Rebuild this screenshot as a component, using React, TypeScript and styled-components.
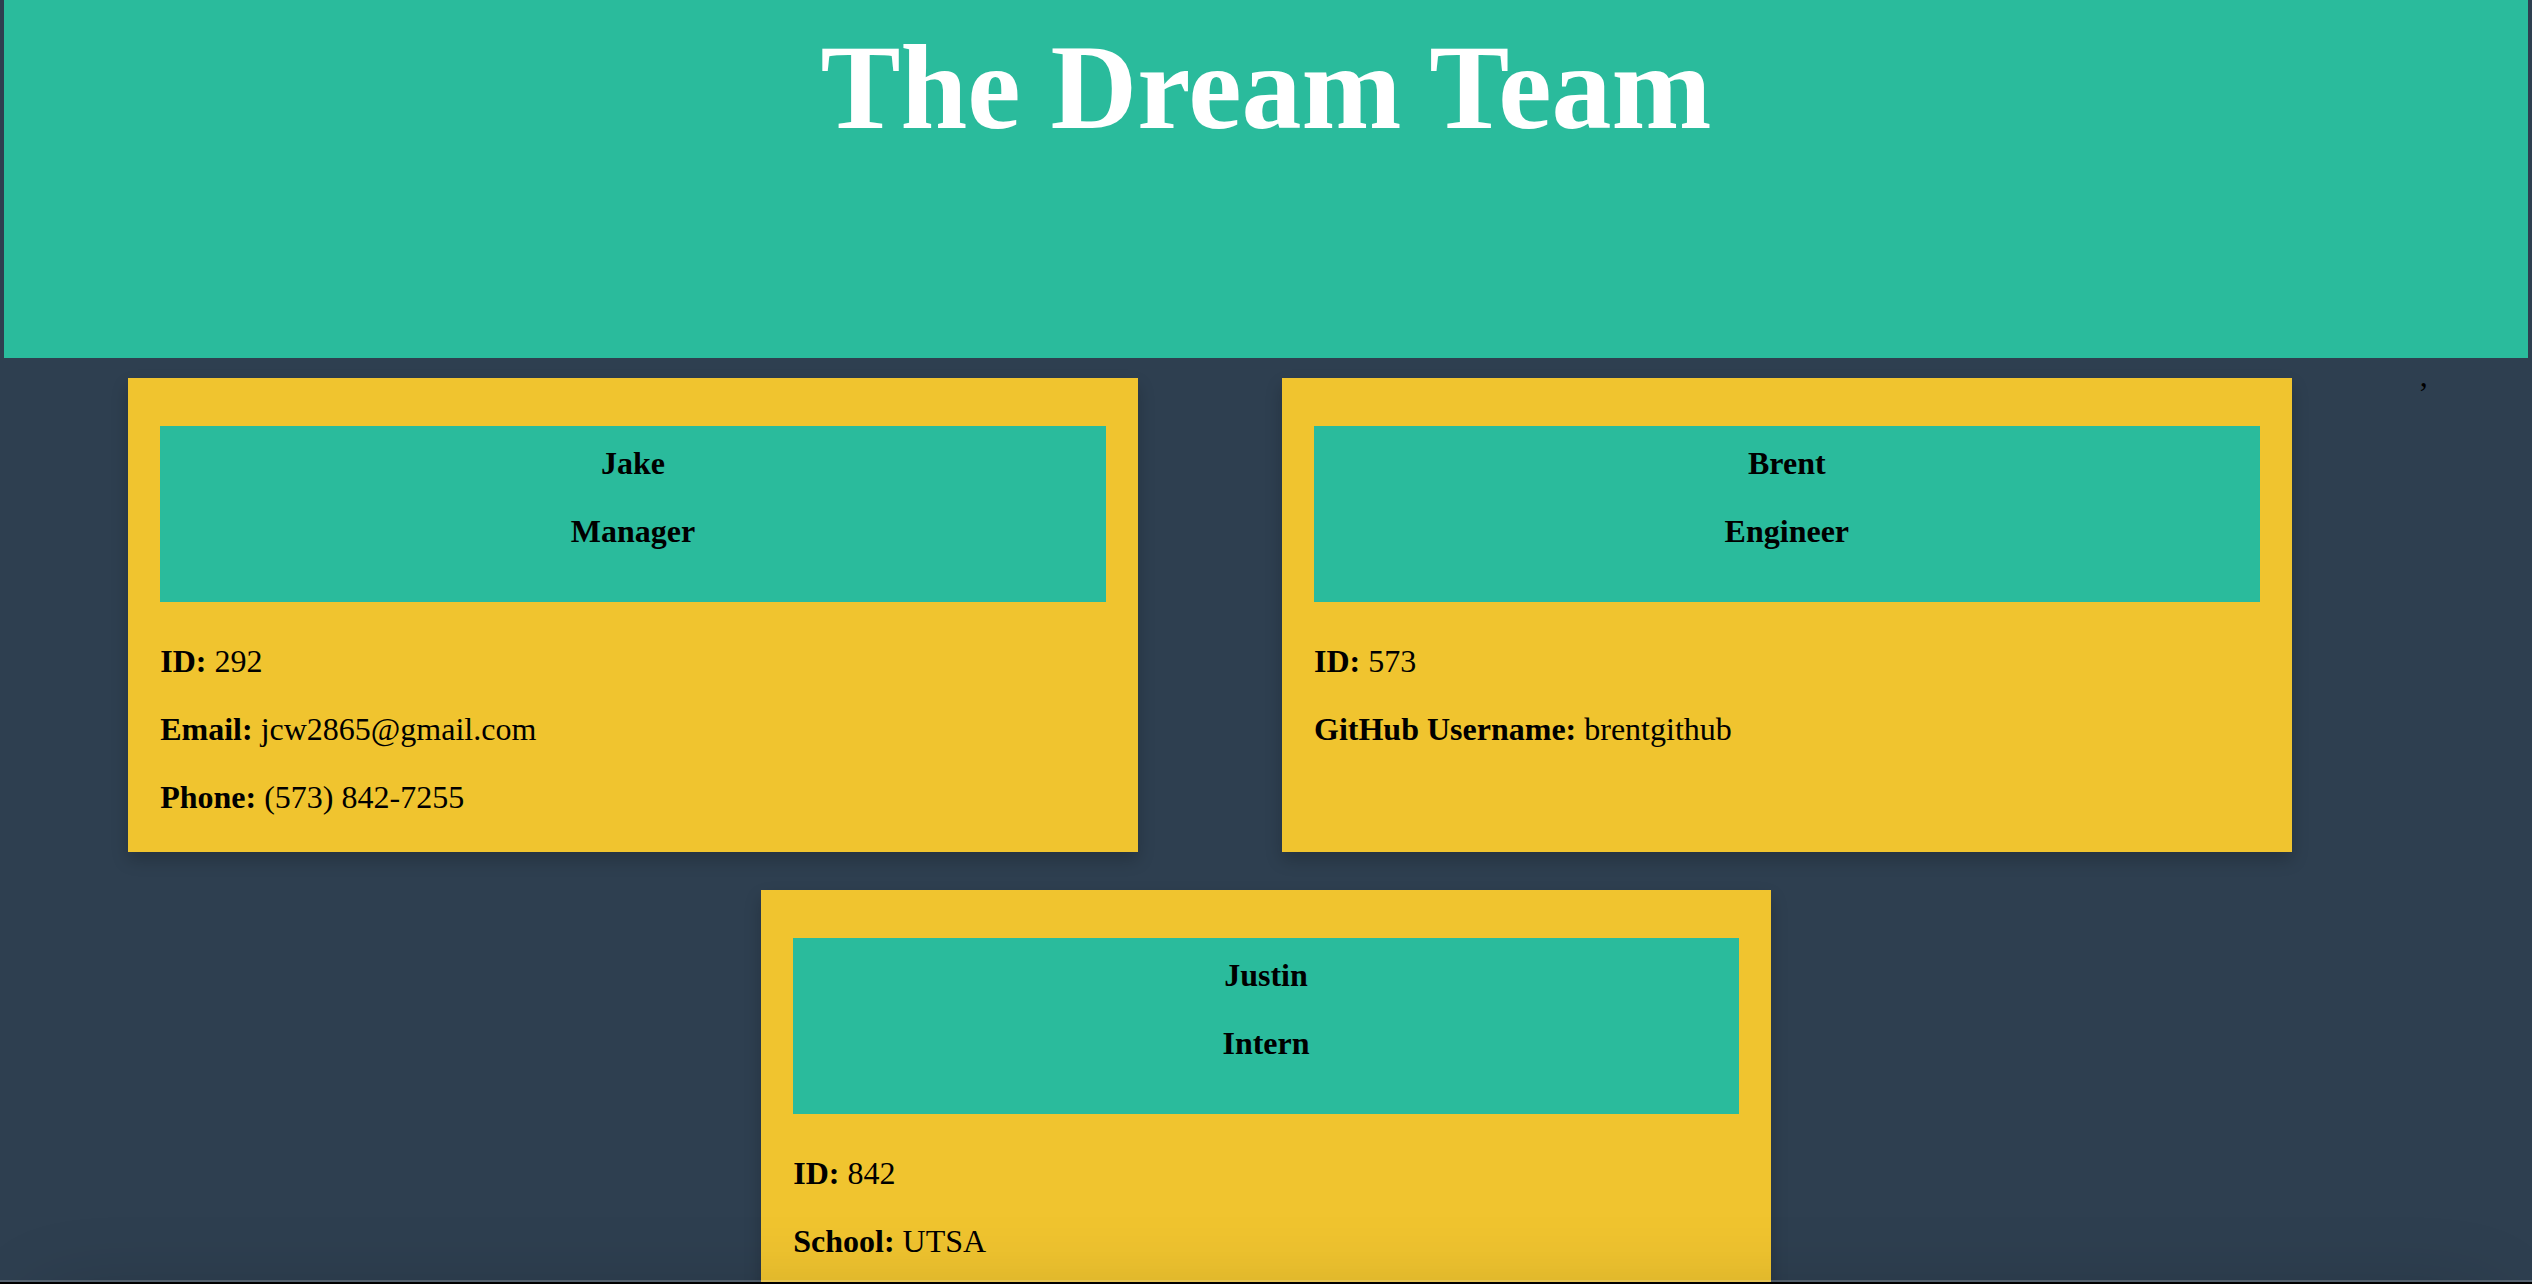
import React from "react";
import styled, { createGlobalStyle } from "styled-components";

const colors = {
  page: "#2e3f50",
  accent: "#2abb9c",
  card: "#f0c42f",
  ink: "#000",
  title: "#fff",
};

const GlobalStyle = createGlobalStyle`
  *, *::before, *::after { box-sizing: border-box; }
  html { scrollbar-width: none; }
  body {
    margin: 0;
    background: ${colors.page};
    color: ${colors.ink};
    font: 32px/34px "Liberation Serif", "Times New Roman", serif;
  }
`;

const Page = styled.div`
  min-height: 100vh;
  padding: 0 4px;
`;

const Header = styled.header`
  min-height: 358px;
  padding: 20px;
  background: ${colors.accent};
  text-align: center;
`;

const Title = styled.h1`
  margin: 0;
  color: ${colors.title};
  font-size: 120px;
  line-height: 136px;
`;

const Team = styled.main`
  display: grid;
  grid-template-columns:
    31fr [first] 40% [first-end] 36fr [second] 40% [second-end]
    32fr [mark] 8px [mark-end] 25fr;
`;

const Card = styled.article<{ $slot: "first" | "second" | "wide" }>`
  grid-column: ${(p) => (p.$slot === "wide" ? "1 / -1" : p.$slot)};
  justify-self: center;
  width: ${(p) => (p.$slot === "wide" ? "40%" : "100%")};
  margin-top: ${(p) => (p.$slot === "wide" ? "38px" : "20px")};
  padding: 48px 32px 38px;
  background: ${colors.card};
  box-shadow: 0 8px 16px rgba(0, 0, 0, 0.2);
`;

const Separator = styled.span`
  grid-column: mark;
`;

const CardHeader = styled.header`
  margin-bottom: 42px;
  padding: 20px;
  background: ${colors.accent};
  text-align: center;
`;

const Heading = styled.h2`
  margin: 0 0 34px;
  font-size: 32px;
  line-height: 34px;
`;

const Details = styled.dl`
  display: grid;
  gap: 34px;
  margin: 0;
`;

const Detail = styled.div`
  display: flex;
  gap: 8px;
`;

const Label = styled.dt`
  font-weight: bold;
`;

const Value = styled.dd`
  margin: 0;
`;

const WindowEdge = styled.div`
  position: fixed;
  right: 0;
  bottom: 0;
  left: 0;
  height: 4px;
  border-top: 2px solid rgba(255, 255, 255, 0.2);
  background: #000;
  background-clip: padding-box;
  pointer-events: none;

  &::before {
    content: "";
    position: absolute;
    top: 2px;
    right: 40px;
    left: 40px;
    height: 200px;
    box-shadow: 0 20px 90px rgba(0, 0, 0, 0.2);
  }
`;

type Member = {
  name: string;
  role: string;
  slot: "first" | "second" | "wide";
  details: [string, string][];
};

const members: Member[] = [
  {
    name: "Jake",
    role: "Manager",
    slot: "first",
    details: [
      ["ID", "292"],
      ["Email", "jcw2865@gmail.com"],
      ["Phone", "(573) 842-7255"],
    ],
  },
  {
    name: "Brent",
    role: "Engineer",
    slot: "second",
    details: [
      ["ID", "573"],
      ["GitHub Username", "brentgithub"],
    ],
  },
  {
    name: "Justin",
    role: "Intern",
    slot: "wide",
    details: [
      ["ID", "842"],
      ["School", "UTSA"],
    ],
  },
];

function MemberCard({ member }: { member: Member }) {
  return (
    <Card $slot={member.slot}>
      <CardHeader>
        <Heading>{member.name}</Heading>
        <Heading as="h3">{member.role}</Heading>
      </CardHeader>
      <Details>
        {member.details.map(([label, value]) => (
          <Detail key={label}>
            <Label>{label}:</Label>
            <Value>{value}</Value>
          </Detail>
        ))}
      </Details>
    </Card>
  );
}

export default function App() {
  const [manager, engineer, intern] = members;
  return (
    <>
      <GlobalStyle />
      <Page>
        <Header>
          <Title>The Dream Team</Title>
        </Header>
        <Team>
          <MemberCard member={manager} />
          <MemberCard member={engineer} />
          <Separator>,</Separator>
          <MemberCard member={intern} />
        </Team>
      </Page>
      <WindowEdge />
    </>
  );
}
